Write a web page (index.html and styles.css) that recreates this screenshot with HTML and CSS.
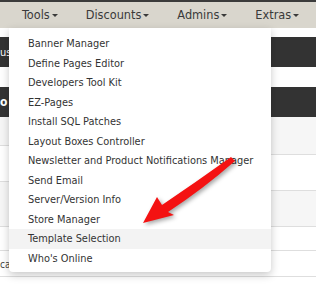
FILE: index.html
```html
<!DOCTYPE html>
<html lang="en">
<head>
  <meta charset="UTF-8">
  <title>Admin - Tools</title>
  <link rel="stylesheet" href="styles.css">
</head>
<body>
  <nav class="navbar">
    <ul class="nav">
      <li class="nav-item">Tools<span class="caret"></span></li>
      <li class="nav-item">Discounts<span class="caret"></span></li>
      <li class="nav-item">Admins<span class="caret"></span></li>
      <li class="nav-item">Extras<span class="caret"></span></li>
    </ul>
  </nav>

  <div class="page">
    <div class="spacer"></div>
    <div class="bar"><span class="edge">us</span></div>
    <div class="spacer spacer-lg"></div>
    <div class="bar bar-head"><span class="edge">o</span></div>
    <div class="panes">
      <div class="pane pane-left">
        <div class="row row-grey" style="height: 29px"></div>
        <div class="row" style="height: 36px"></div>
        <div class="row row-grey" style="height: 45px"></div>
        <div class="row" style="height: 24px"></div>
        <div class="row" style="height: 26px"><span class="edge edge-dark">ca</span></div>
      </div>
      <div class="pane pane-right">
        <div class="row row-grey" style="height: 38px"></div>
        <div class="row" style="height: 36px"></div>
        <div class="row row-grey" style="height: 36px"></div>
        <div class="row" style="height: 24px"></div>
        <div class="row" style="height: 26px"></div>
      </div>
    </div>
  </div>

  <ul class="dropdown">
    <li>Banner Manager</li>
    <li>Define Pages Editor</li>
    <li>Developers Tool Kit</li>
    <li>EZ-Pages</li>
    <li>Install SQL Patches</li>
    <li>Layout Boxes Controller</li>
    <li>Newsletter and Product Notifications Manager</li>
    <li>Send Email</li>
    <li>Server/Version Info</li>
    <li>Store Manager</li>
    <li class="active">Template Selection</li>
    <li>Who's Online</li>
  </ul>

  <svg class="arrow" width="316" height="295" viewBox="0 0 316 295">
    <path d="M143 223 L157 197 L162 205 Q196 182 231 157 L235 161 Q203 189 168 212 L174 215 Z" fill="#f41212"/>
  </svg>
</body>
</html>
```

FILE: styles.css
```css
body {
  margin: 0;
  padding: 0;
  background: #fff;
  font-family: "DejaVu Sans Condensed", "DejaVu Sans", sans-serif;
  font-stretch: condensed;
  color: #333;
  width: 316px;
  height: 295px;
  overflow: hidden;
  position: relative;
}

.navbar {
  background: #d9d6cd;
  border-top: 2px solid #3b3b3b;
  height: 26px;
}

.nav {
  list-style: none;
  margin: 0;
  padding: 0 0 0 8px;
  display: flex;
}

.nav-item {
  padding: 0 14px;
  height: 26px;
  line-height: 26px;
  font-size: 12.6px;
  color: #3a3a3a;
  display: flex;
  align-items: center;
}

.caret {
  display: inline-block;
  width: 0;
  height: 0;
  margin-left: 2px;
  margin-top: 1px;
  border-top: 3px solid #3a3a3a;
  border-left: 3px solid transparent;
  border-right: 3px solid transparent;
}

.spacer {
  height: 9px;
}

.spacer-lg {
  height: 20px;
}

.bar {
  background: #333;
  height: 30px;
  display: flex;
  align-items: center;
  color: #fff;
  font-size: 11px;
}

.bar-head {
  font-weight: bold;
  font-size: 12px;
}

.edge {
  white-space: nowrap;
}

.edge-dark {
  color: #444;
  font-size: 10px;
  padding-top: 2px;
}

.panes {
  display: grid;
  grid-template-columns: 140px 1fr;
}

.row {
  border-bottom: 1px solid #dedede;
  display: flex;
  align-items: center;
  box-sizing: border-box;
}

.row-grey {
  background: #f6f6f6;
}

.dropdown {
  position: absolute;
  left: 9px;
  top: 28px;
  width: 262px;
  margin: 0;
  padding: 6px 0 4px;
  list-style: none;
  background: #fff;
  border-radius: 0 0 4px 4px;
  box-shadow: 0 3px 8px rgba(0, 0, 0, 0.22);
}

.dropdown li {
  height: 19.5px;
  line-height: 19.5px;
  padding: 0 0 0 19px;
  font-size: 10.9px;
  color: #333;
  white-space: nowrap;
}

.dropdown li.active {
  background: #f3f3f3;
}

.arrow {
  position: absolute;
  left: 0;
  top: 0;
  pointer-events: none;
  filter: drop-shadow(2px 2px 2px rgba(0, 0, 0, 0.35));
}
```
